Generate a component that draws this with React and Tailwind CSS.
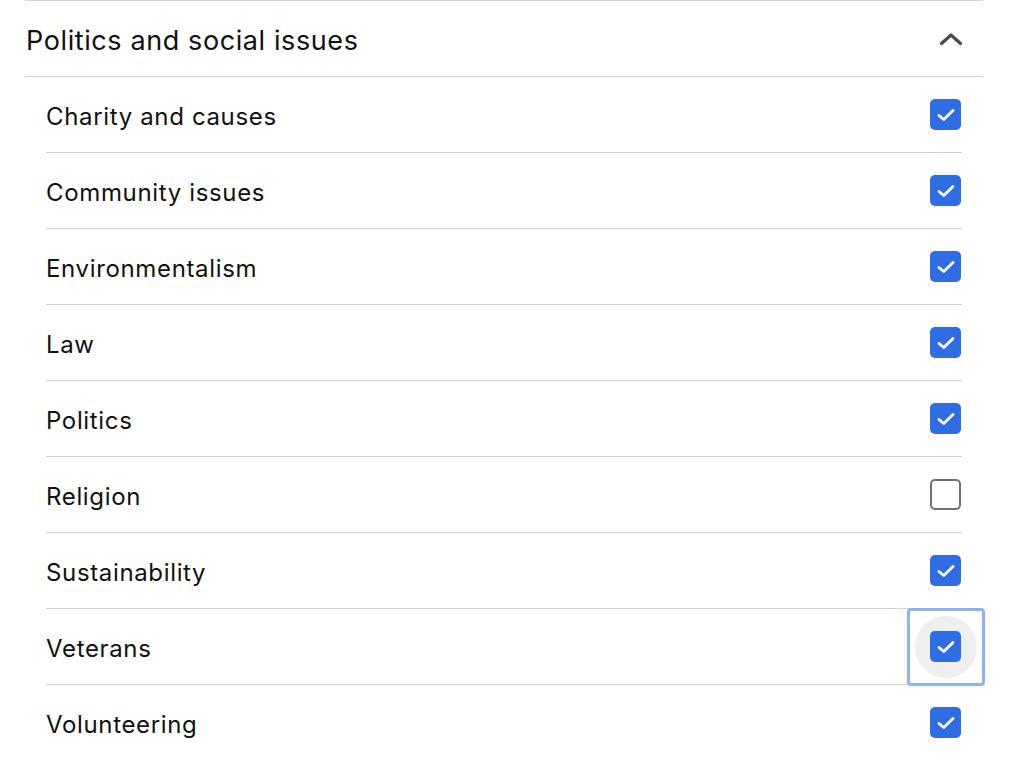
import React from 'react';

const items = [
  { label: 'Charity and causes', checked: true },
  { label: 'Community issues', checked: true },
  { label: 'Environmentalism', checked: true },
  { label: 'Law', checked: true },
  { label: 'Politics', checked: true },
  { label: 'Religion', checked: false },
  { label: 'Sustainability', checked: true },
  { label: 'Veterans', checked: true, focused: true },
  { label: 'Volunteering', checked: true },
];

const Check = ({ checked, focused }) => {
  return (
    <div className="relative w-[31px] h-[31px]">
      {focused && (
        <div className="absolute -left-[23px] -top-[23px] w-[78px] h-[78px] rounded-[4px] border-[3px] border-[#8fb1f5] flex items-center justify-center">
          <div className="w-[62px] h-[62px] rounded-full bg-[#efefef]"></div>
        </div>
      )}
      {checked ? (
        <div className="relative w-[31px] h-[31px] rounded-[5px] bg-[#2e6de3] flex items-center justify-center">
          <svg width="18" height="14" viewBox="0 0 18 14" fill="none">
            <path d="M2 7.5 L6.8 11.5 L16 2.5" stroke="#fff" strokeWidth="2.8" strokeLinecap="round" strokeLinejoin="round" />
          </svg>
        </div>
      ) : (
        <div className="relative w-[31px] h-[31px] rounded-[5px] border-2 border-[#707070] bg-white"></div>
      )}
    </div>
  );
};

const App = () => {
  return (
    <div className="w-[1024px] h-[760px] bg-white overflow-hidden" style={{ fontFamily: 'Inter, "Liberation Sans", Arial, sans-serif' }}>
      <div className="ml-[25px] w-[958px] border-t border-[#d2d2d2]">
        <div className="h-[76px] border-b border-[#d2d2d2] flex items-center justify-between pl-px pr-[20px]">
          <h2 className="text-[27px] text-[#111] leading-none tracking-[0.6px] pt-[4px]">Politics and social issues</h2>
          <svg width="24" height="14" viewBox="0 0 24 14" fill="none">
            <path d="M2.5 11.5 L12 3 L21.5 11.5" stroke="#4a4a4a" strokeWidth="3.2" strokeLinecap="round" strokeLinejoin="round" />
          </svg>
        </div>
        <div className="pl-[21px] pr-[21px]">
          {items.map((item, id) => (
            <div key={id} className="h-[76px] border-b border-[#d2d2d2] flex items-center justify-between pr-px">
              <span className="text-[24px] text-[#111] leading-none tracking-[0.65px] pt-[4px]">{item.label}</span>
              <Check checked={item.checked} focused={item.focused} />
            </div>
          ))}
        </div>
      </div>
    </div>
  );
};

export default App;
